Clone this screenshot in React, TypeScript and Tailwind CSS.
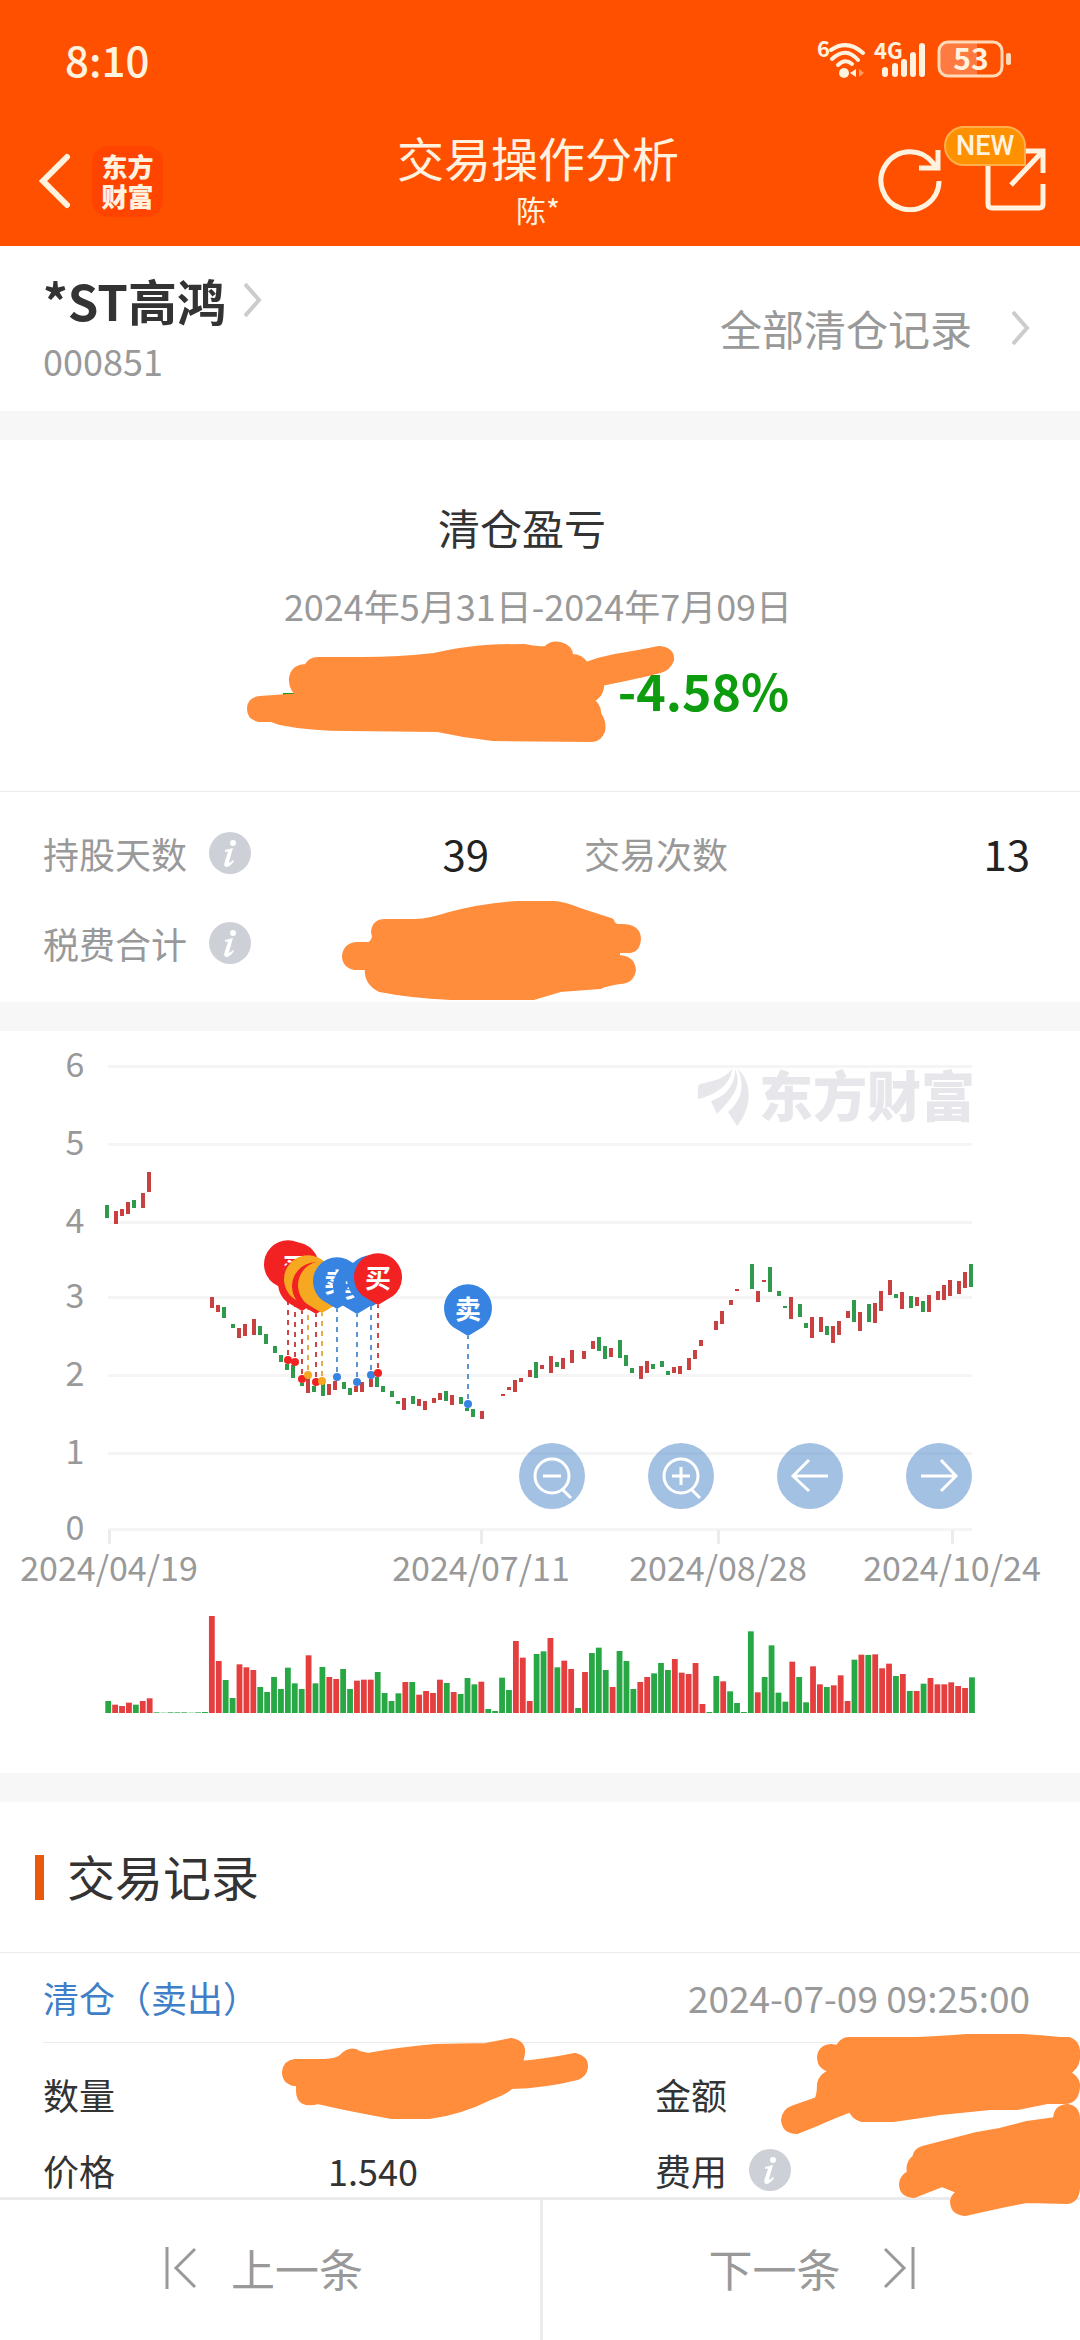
import type { ReactNode } from 'react';
import clsx from 'clsx';

type Tone = 'r' | 'g';

const CANDLE_COLOR = { r: '#c84040', g: '#2f9a4c' };
const VOLUME_COLOR = { r: '#e53e3e', g: '#28a745' };
const PIN_COLOR = { buy: '#f22222', sell: '#3683e2', both: '#f6a821' };
const LINE_COLOR = { buy: '#cf4444', sell: '#5b93d3', both: '#e3ad4f' };

// [x, top, bottom, tone]
const candles: [number, number, number, Tone][] = [
  [106, 205, 218, 'g'], [115, 211, 224, 'r'], [121, 209, 216, 'r'], [127, 202, 214, 'r'],
  [133, 200, 208, 'g'], [142, 193, 208, 'r'], [148, 172, 192, 'r'], [211, 297, 308, 'r'],
  [217, 305, 312, 'r'], [223, 307, 318, 'g'], [232, 324, 328, 'g'], [238, 328, 338, 'r'],
  [244, 324, 336, 'r'], [253, 319, 335, 'r'], [259, 326, 335, 'g'], [265, 334, 344, 'g'],
  [274, 346, 353, 'g'], [280, 355, 362, 'g'], [286, 364, 370, 'g'], [292, 365, 378, 'g'],
  [301, 383, 386, 'g'], [307, 378, 393, 'r'], [313, 386, 392, 'g'], [322, 384, 396, 'g'],
  [328, 384, 395, 'r'], [334, 381, 390, 'r'], [343, 382, 389, 'g'], [349, 388, 395, 'g'],
  [355, 386, 392, 'r'], [361, 382, 392, 'r'], [370, 379, 387, 'r'], [376, 377, 387, 'g'],
  [382, 386, 392, 'g'], [391, 391, 397, 'g'], [397, 401, 404, 'g'], [403, 398, 410, 'r'],
  [412, 396, 404, 'g'], [418, 399, 406, 'r'], [424, 401, 410, 'r'], [433, 398, 403, 'r'],
  [439, 393, 400, 'r'], [445, 391, 401, 'g'], [451, 395, 405, 'r'], [460, 397, 404, 'g'],
  [466, 408, 411, 'g'], [472, 409, 417, 'g'], [481, 411, 419, 'r'], [502, 394, 396, 'r'],
  [508, 387, 390, 'r'], [514, 380, 392, 'r'], [520, 378, 382, 'r'], [529, 370, 377, 'r'],
  [535, 362, 378, 'g'], [541, 365, 369, 'r'], [550, 356, 373, 'r'], [556, 362, 367, 'g'],
  [562, 358, 369, 'r'], [571, 350, 363, 'r'], [583, 351, 359, 'r'], [592, 341, 349, 'r'],
  [598, 337, 351, 'g'], [604, 346, 359, 'g'], [610, 348, 357, 'r'], [619, 340, 358, 'g'],
  [625, 355, 366, 'g'], [631, 368, 373, 'g'], [640, 366, 379, 'r'], [646, 361, 373, 'r'],
  [652, 364, 369, 'g'], [661, 361, 367, 'g'], [667, 371, 375, 'g'], [673, 367, 373, 'r'],
  [679, 366, 374, 'r'], [688, 358, 370, 'r'], [694, 350, 359, 'r'], [700, 340, 346, 'r'],
  [715, 321, 330, 'r'], [721, 311, 324, 'r'], [730, 300, 305, 'r'], [736, 289, 291, 'r'],
  [751, 264, 289, 'g'], [757, 291, 302, 'r'], [763, 280, 282, 'r'], [769, 267, 292, 'g'],
  [778, 291, 296, 'g'], [784, 306, 308, 'g'], [790, 297, 319, 'r'], [799, 304, 317, 'g'],
  [805, 323, 328, 'g'], [811, 317, 338, 'r'], [820, 317, 332, 'r'], [826, 326, 335, 'g'],
  [832, 326, 343, 'r'], [838, 321, 335, 'r'], [847, 311, 318, 'r'], [853, 300, 322, 'g'],
  [859, 312, 331, 'r'], [868, 304, 322, 'g'], [874, 303, 323, 'r'], [880, 291, 311, 'r'],
  [889, 280, 295, 'r'], [895, 294, 298, 'g'], [901, 292, 309, 'r'], [910, 296, 308, 'g'],
  [916, 297, 306, 'r'], [922, 301, 312, 'g'], [928, 295, 312, 'r'], [937, 291, 300, 'r'],
  [943, 285, 300, 'r'], [949, 280, 296, 'r'], [958, 281, 294, 'r'], [964, 272, 288, 'r'],
  [970, 264, 287, 'g'],
];

// one entry per trading day: tone + volume
const volumes = (
  'g36 r25 r21 r31 g25 r36 r44 g2 g1 g2 g2 g2 g1 g2 g3 r291 r156 g99 g45 r146 r137 r129 g78 g63 g108 ' +
  'g72 g136 g89 g72 r173 g89 g138 r108 r102 g132 g72 r97 r100 r100 g123 g60 g36 g59 r93 g93 r55 r66 ' +
  'r60 r100 g90 r63 g57 g105 g86 r94 g12 g6 g106 g69 r216 r166 r36 g177 g185 r225 g137 r157 r132 g15 ' +
  'r123 g180 g196 g129 r78 g186 g156 g72 r93 r108 g119 g150 g129 r162 r121 r117 r150 r27 g3 g111 r95 ' +
  'g65 g30 g3 g245 r62 g108 g203 g61 g34 r154 g108 g32 r140 r86 g78 r83 r113 r36 g160 r175 g174 r176 ' +
  'r134 r148 g111 r117 g66 r66 g88 r105 r86 r86 r92 r81 r75 g107'
)
  .split(' ')
  .map((v) => ({ tone: v[0] as Tone, value: Number(v.slice(1)) }));

// pins buried under their neighbours carry no label
const pins: { x: number; y: number; kind: 'buy' | 'sell' | 'both'; label?: string }[] = [
  { x: 288, y: 360, kind: 'buy' },
  { x: 295, y: 362, kind: 'buy', label: '买' },
  { x: 302, y: 379, kind: 'buy' },
  { x: 308, y: 375, kind: 'both' },
  { x: 316, y: 382, kind: 'buy' },
  { x: 322, y: 381, kind: 'both' },
  { x: 337, y: 377, kind: 'sell', label: '卖' },
  { x: 357, y: 382, kind: 'sell', label: '卖' },
  { x: 371, y: 375, kind: 'sell' },
  { x: 378, y: 373, kind: 'buy', label: '买' },
  { x: 468, y: 404, kind: 'sell', label: '卖' },
];

const yAxis = [
  { label: '6', y: 66 },
  { label: '5', y: 144 },
  { label: '4', y: 222 },
  { label: '3', y: 297 },
  { label: '2', y: 375 },
  { label: '1', y: 453 },
  { label: '0', y: 529 },
];

const xAxis = [
  { label: '2024/04/19', x: 109 },
  { label: '2024/07/11', x: 481 },
  { label: '2024/08/28', x: 718 },
  { label: '2024/10/24', x: 952 },
];

function StatusBar() {
  return (
    <div className="flex items-center justify-between pt-[30px] pr-[68px] pb-7 pl-[65px] text-[#fff3e0]">
      <span className="text-[42px] leading-[58px] font-medium">8:10</span>
      <svg width="196" height="40" viewBox="0 0 196 40" fill="none" className="overflow-visible">
        <text x="1" y="18" fontSize="22" fontWeight="700" fill="currentColor">6</text>
        <g stroke="currentColor" strokeWidth="4" strokeLinecap="round">
          <path d="M15 11 Q31 0 47 14" />
          <path d="M16 20 Q30 7 42 21" />
          <path d="M22 26 Q29 19 36 25" />
        </g>
        <circle cx="28" cy="34" r="5" fill="currentColor" />
        <path d="M34 34 L40 30 V38 Z" fill="currentColor" />
        <path d="M48 34 L43 30 V38 Z" fill="#ff9a66" />
        <text x="58" y="20" fontSize="22" fontWeight="700" fill="currentColor">4G</text>
        <g stroke="currentColor" strokeWidth="6" strokeLinecap="round">
          <path d="M69 31 V35" />
          <path d="M79 27 V35" />
          <path d="M88 23 V35" />
          <path d="M97 16 V35" />
          <path d="M106 7 V35" />
        </g>
        <path d="M132 3 H161 V37 H132 Q124 37 124 29 V11 Q124 3 132 3 Z" fill="#ff7a40" />
        <rect x="123" y="3" width="63" height="34" rx="9" stroke="#ffd9b8" strokeWidth="3" />
        <rect x="190" y="14" width="5" height="12" rx="2" fill="#ffd9b8" />
        <text x="155" y="31" fontSize="30" fontWeight="700" fill="currentColor" textAnchor="middle">53</text>
      </svg>
    </div>
  );
}

function NavBar() {
  return (
    <div className="grid h-[130px] grid-cols-[1fr_auto_1fr] items-center pr-8 pl-[38px] text-[#fff3e0]">
      <div className="flex items-center gap-5">
        <button type="button" aria-label="返回">
          <svg width="34" height="56" viewBox="0 0 34 56" fill="none" stroke="currentColor" strokeWidth="6">
            <path d="M29 4 L5 28 L29 52" strokeLinecap="round" />
          </svg>
        </button>
        <div className="flex size-[71px] flex-col items-center justify-center rounded-2xl bg-[#ff4400] text-[26px] leading-[30px] font-black">
          <span>东方</span>
          <span>财富</span>
        </div>
      </div>
      <div className="pr-2.5 pb-1 text-center">
        <h1 className="text-[47px] leading-[60px]">交易操作分析</h1>
        <p className="text-[30px] leading-[44px]">陈*</p>
      </div>
      <div className="flex items-center justify-end gap-10 pb-1">
        <button type="button" aria-label="刷新">
          <svg width="66" height="66" viewBox="0 0 66 66" fill="none" stroke="currentColor" strokeWidth="5">
            <path d="M61 35 A29 29 0 1 1 55 17 L59 22" />
            <path d="M60 4 V22 H41" />
          </svg>
        </button>
        <button type="button" aria-label="分享" className="relative">
          <svg width="64" height="66" viewBox="0 0 64 66" fill="none" stroke="currentColor" strokeWidth="5">
            <path d="M40 5 H59 V27" />
            <path d="M59 5 L27 39" />
            <path d="M4 18 V58 Q4 62 8 62 H55 Q59 62 59 58 V38" />
          </svg>
          <span className="absolute -top-5 -left-10 rounded-[20px] rounded-br-none border-2 border-[#ffb04d] bg-[#ff9100] px-2.5 font-[Roboto] text-[27px] leading-9 font-medium">
            NEW
          </span>
        </button>
      </div>
    </div>
  );
}

function Chevron() {
  return (
    <svg width="18" height="36" viewBox="0 0 18 36" fill="none" stroke="#cccccc" strokeWidth="4">
      <path d="M1 2 L15 18 L1 34" />
    </svg>
  );
}

function InfoButton({ label }: { label: string }) {
  return (
    <button type="button" aria-label={label}>
      <svg width="42" height="42" viewBox="0 0 42 42">
        <circle cx="21" cy="21" r="21" fill="#cdd0d6" />
        <circle cx="24" cy="11" r="3" fill="#fff" />
        <path
          d="M16 18 Q20 17 24 16 L20 30 Q20 32 24 28 L25 29 Q21 35 17 35 Q14 34 16 29 L19 20 Q18 19 16 20 Z"
          fill="#fff"
        />
      </svg>
    </button>
  );
}

// Marker stroke that hides a private amount
function Scribble({ d, viewBox, className }: { d: string; viewBox: string; className: string }) {
  return (
    <svg viewBox={viewBox} className={clsx('pointer-events-none absolute max-w-none', className)} aria-hidden="true">
      <path d={d} fill="#ff8d3c" stroke="#ff8d3c" strokeWidth="6" strokeLinejoin="round" />
    </svg>
  );
}

function StockHeader() {
  return (
    <section className="flex items-center justify-between bg-white pt-6 pr-[50px] pb-[21px] pl-[43px]">
      <div>
        <a href="#stock" className="flex items-center gap-[18px] text-[49px] leading-[60px] font-bold text-[#333333]">
          *ST高鸿
          <Chevron />
        </a>
        <p className="text-[36px] leading-[60px] text-[#999999]">000851</p>
      </div>
      <a href="#records" className="flex items-center gap-10 pb-1 text-[42px] leading-[60px] text-[#999999]">
        全部清仓记录
        <Chevron />
      </a>
    </section>
  );
}

function Summary() {
  return (
    <section className="bg-white">
      <div className="border-b border-[#ebebeb] pt-[57px] pb-[66px] text-center">
        <h2 className="pr-9 text-[42px] leading-[60px] text-[#333333]">清仓盈亏</h2>
        <p className="mt-[18px] pr-1 text-[36px] leading-[60px] text-[#999999]">2024年5月31日-2024年7月09日</p>
        <div className="mt-[18px] flex justify-center gap-[30px] pr-2 text-[50px] leading-[72px] font-bold text-[#0d9c0d]">
          <div className="relative w-[305px]">
            <div className="mt-10 h-[3px] w-10 bg-[#0d9c0d]" />
            <Scribble
              viewBox="244 638 434 108"
              className="-top-[15px] -left-[39px] z-10 w-[434px]"
              d="M260 699 L302 696 Q291 690 292 678 Q294 667 307 667 Q310 660 318 660 H362 Q400 660 434 656 C470 648 490 647 524 647 Q536 650 546 649 Q552 643 560 645 Q571 648 570 657 Q580 656 586 665 Q600 660 615 657 Q640 653 659 649 Q672 650 671 660 Q668 668 660 670 Q640 675 601 683 Q602 695 590 700 Q599 706 598 714 Q604 722 602 731 Q599 739 592 739 L493 738 Q465 735 438 729 L350 728 Q310 728 280 722 L271 719 L259 719 Q250 717 250 709 Q250 700 260 699 Z"
            />
          </div>
          <span>-4.58%</span>
        </div>
      </div>
      <dl className="grid grid-cols-2 gap-x-[95px] gap-y-[30px] pt-[31px] pr-[50px] pb-[29px] pl-[43px] text-[36px] leading-[60px] text-[#999999]">
        <div className="flex items-center justify-between">
          <dt className="flex items-center gap-[22px]">
            持股天数
            <InfoButton label="持股天数说明" />
          </dt>
          <dd className="text-[42px] text-[#222222]">39</dd>
        </div>
        <div className="flex items-center justify-between">
          <dt>交易次数</dt>
          <dd className="text-[42px] text-[#222222]">13</dd>
        </div>
        <div className="relative flex items-center">
          <dt className="flex items-center gap-[22px]">
            税费合计
            <InfoButton label="税费合计说明" />
          </dt>
          <dd>
            <Scribble
              viewBox="340 899 304 104"
              className="-top-[14px] left-[297px] w-[304px]"
              d="M357 945 H370 Q377 940 374 932 Q375 922 385 922 H415 Q430 921 446 916 Q482 906 518 904 H554 Q565 905 580 911 L611 921 Q614 928 619 927 Q638 926 638 939 Q637 950 629 950 H617 V958 Q632 958 633 970 Q631 981 620 981 Q606 983 600 986 L560 989 Q550 992 533 997 H451 Q410 995 380 989 Q366 982 368 967 H355 Q345 965 345 956 Q346 946 357 945 Z"
            />
          </dd>
        </div>
      </dl>
    </section>
  );
}

function Pin({ x, y, kind, label }: (typeof pins)[number]) {
  const cy = y - 95;
  return (
    <g>
      <path
        d={`M${x} ${cy + 27} L${x - 15} ${cy + 18} A24 24 0 1 1 ${x + 15} ${cy + 18} Z`}
        fill={PIN_COLOR[kind]}
      />
      {label && (
        <text x={x} y={cy + 10} fontSize="26" fontWeight="700" fill="#ffffff" textAnchor="middle">
          {label}
        </text>
      )}
    </g>
  );
}

function RoundButton({ label, children }: { label: string; children: ReactNode }) {
  return (
    <button type="button" aria-label={label} className="size-[66px] rounded-full bg-[#4784c8]/50">
      <svg width="66" height="66" viewBox="0 0 66 66" fill="none" stroke="#ffffff" strokeWidth="3">
        {children}
      </svg>
    </button>
  );
}

function PriceChart() {
  return (
    <section className="relative bg-white">
      <svg viewBox="0 31 1080 742" className="block w-full">
        {yAxis.map(({ label, y }) => (
          <g key={label}>
            <rect x="108" y={y - 1} width="864" height="3" fill="#f5f5f5" />
            <text x="75" y={y + 11} fontSize="34" fill="#999999" textAnchor="middle">
              {label}
            </text>
          </g>
        ))}
        {xAxis.map(({ label, x }) => (
          <g key={label}>
            <rect x={x - 1} y="530" width="3" height="14" fill="#ececec" />
            <text x={x} y="581" fontSize="34" fill="#999999" textAnchor="middle">
              {label}
            </text>
          </g>
        ))}

        {/* Watermark */}
        <g fill="#e6e6eb">
          <path d="M698 99 Q697 85 700 84 C714 81 724 79 732 69 C731 84 716 95 698 99 Z" />
          <path d="M735 69 C744 88 728 102 717 114 L711 101 C726 96 736 84 735 69 Z" />
          <path d="M738 69 C753 84 752 108 737 126 L728 112 C740 102 746 88 738 69 Z" />
          <text x="867" y="117" fontSize="54" fontWeight="900" textAnchor="middle">
            东方财富
          </text>
        </g>

        {candles.map(([x, top, bottom, tone]) => (
          <rect key={x} x={x - 1} y={top} width="4" height={bottom - top} fill={CANDLE_COLOR[tone]} />
        ))}

        {pins.map(({ x, y, kind }) => (
          <g key={x}>
            <path d={`M${x} ${y - 5} V${y - 68}`} stroke={LINE_COLOR[kind]} strokeWidth="2" strokeDasharray="5 5" />
            <circle cx={x} cy={y} r="4" fill={PIN_COLOR[kind]} />
          </g>
        ))}
        {pins.map((pin) => (
          <Pin key={pin.x} {...pin} />
        ))}

        {volumes.map(({ tone, value }, i) => (
          <rect
            key={i}
            x={105.3 + i * 6.91}
            y={713 - value / 3}
            width="5.8"
            height={value / 3}
            fill={VOLUME_COLOR[tone]}
          />
        ))}
      </svg>

      <div className="absolute top-[412px] right-[108px] flex gap-[63px]">
        <RoundButton label="缩小">
          <circle cx="33" cy="33" r="17" />
          <path d="M24 33 H42 M43 46 L52 55" />
        </RoundButton>
        <RoundButton label="放大">
          <circle cx="33" cy="33" r="17" />
          <path d="M24 33 H42 M33 24 V42 M43 46 L52 55" />
        </RoundButton>
        <RoundButton label="向左">
          <path d="M51 33 H16 M32 17 L16 33 L32 48" />
        </RoundButton>
        <RoundButton label="向右">
          <path d="M15 33 H50 M35 17 L50 33 L35 48" />
        </RoundButton>
      </div>
    </section>
  );
}

function Records() {
  return (
    <section className="bg-white">
      <div className="flex h-[151px] items-center gap-[23px] border-b border-[#ebebeb] pl-[35px]">
        <div className="h-[45px] w-[9px] bg-[#e8590c]" />
        <h2 className="pb-1 text-[48px] leading-[60px] text-[#333333]">交易记录</h2>
      </div>
      <div className="pl-[43px] text-[36px]">
        <div className="flex justify-between border-b border-[#ebebeb] pr-[50px] leading-[89px]">
          <span className="text-[#3f7fc8]">清仓（卖出）</span>
          <time className="text-[37px] text-[#999999]">2024-07-09 09:25:00</time>
        </div>
        <dl className="relative grid grid-cols-[375px_1fr] gap-x-[237px] gap-y-[26px] pt-[26px] leading-[50px] text-[#333333]">
          <div>
            <dt>数量</dt>
            <dd>
              <Scribble
                viewBox="280 2037 310 86"
                className="top-[-7px] left-[237px] w-[310px]"
                d="M295 2063 H324 Q338 2062 342 2058 Q351 2049 359 2055 L368 2057 Q400 2051 435 2048 L486 2047 Q500 2044 511 2042 Q523 2044 522 2054 L520 2065 Q545 2063 575 2057 Q586 2060 585 2068 Q584 2076 577 2078 Q545 2086 511 2087 Q505 2093 490 2098 Q460 2113 429 2117 H392 Q348 2109 318 2102 Q299 2107 299 2092 V2084 H294 Q285 2082 285 2073 Q286 2064 295 2063 Z"
              />
            </dd>
          </div>
          <div>
            <dt>金额</dt>
            <dd>
              <Scribble
                viewBox="780 2033 300 104"
                className="top-[-11px] right-0 w-[300px]"
                d="M831 2048 L838 2049 Q842 2041 849 2041 H917 Q940 2040 967 2038 H1023 Q1040 2039 1060 2041 H1069 Q1078 2044 1077 2056 Q1078 2068 1066 2074 Q1078 2079 1077 2088 Q1076 2101 1066 2102 L1047 2102 L1017 2108 H990 L940 2113 Q915 2117 893 2120 H862 Q854 2118 851 2110 Q830 2118 817 2124 L797 2132 Q785 2132 784 2121 Q785 2112 794 2109 L817 2101 Q820 2097 820 2085 Q821 2077 832 2073 L836 2071 Q820 2070 820 2058 Q821 2049 831 2048 Z"
              />
            </dd>
          </div>
          <div className="flex justify-between">
            <dt>价格</dt>
            <dd>1.540</dd>
          </div>
          <div>
            <dt className="flex items-center gap-[22px]">
              费用
              <InfoButton label="费用说明" />
            </dt>
            <dd>
              <Scribble
                viewBox="896 2102 184 118"
                className="top-[58px] right-0 z-20 w-[184px]"
                d="M923 2150 L977 2136 L1000 2132 L1027 2125 L1056 2121 Q1056 2109 1067 2108 Q1077 2109 1077 2120 V2190 Q1076 2201 1067 2202 L1027 2201 Q1000 2206 987 2209 L965 2214 Q953 2213 953 2202 Q955 2194 962 2193 L942 2185 L914 2196 Q902 2195 902 2185 Q902 2179 910 2174 Q908 2164 915 2159 Q916 2152 923 2150 Z"
              />
            </dd>
          </div>
        </dl>
      </div>
    </section>
  );
}

function Pager() {
  return (
    <footer className="sticky bottom-0 z-10 mt-auto grid h-[143px] grid-cols-2 border-t-3 border-[#ebebeb] bg-white text-[44px] text-[#999999]">
      <button type="button" className="flex items-center justify-center gap-[34px] pr-3 pb-1">
        <svg width="32" height="44" viewBox="0 0 32 44" fill="none" stroke="currentColor" strokeWidth="3">
          <path d="M2 1 V43 M30 3 L11 22 L30 41" />
        </svg>
        上一条
      </button>
      <button type="button" className="flex items-center justify-center gap-[42px] border-l-3 border-[#ebebeb] pb-1">
        下一条
        <svg width="32" height="44" viewBox="0 0 32 44" fill="none" stroke="currentColor" strokeWidth="3">
          <path d="M30 1 V43 M2 3 L21 22 L2 41" />
        </svg>
      </button>
    </footer>
  );
}

export default function App() {
  return (
    <div className="flex min-h-screen flex-col bg-white font-['Noto_Sans_CJK_SC',sans-serif]">
      <header className="bg-[#ff5000]">
        <StatusBar />
        <NavBar />
      </header>
      <main className="flex flex-col gap-[29px] bg-[#f7f7f7]">
        <StockHeader />
        <Summary />
        <PriceChart />
        <Records />
      </main>
      <Pager />
    </div>
  );
}
